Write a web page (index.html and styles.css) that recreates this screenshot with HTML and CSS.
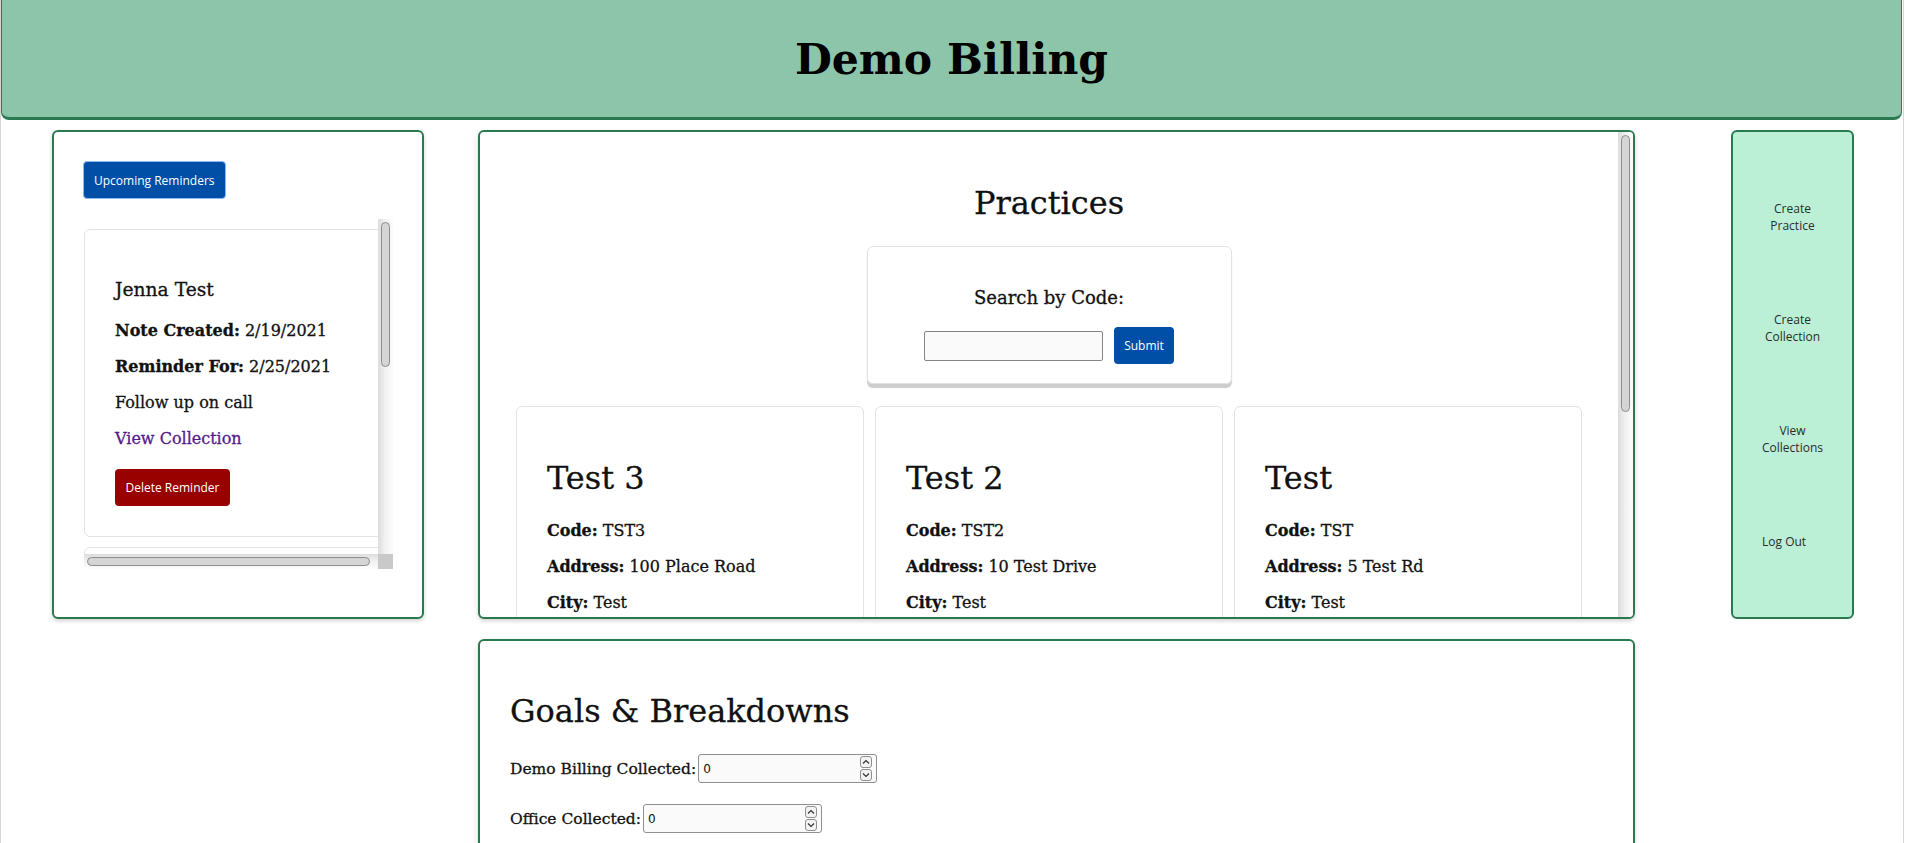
FILE: index.html
```html
<!DOCTYPE html>
<html lang="en">
<head>
<meta charset="utf-8">
<title>Demo Billing</title>
<link rel="stylesheet" href="styles.css">
</head>
<body>
<div class="page">
  <header class="topbar">
    <h1 class="brand">Demo Billing</h1>
  </header>

  <main class="layout">
    <aside class="panel reminders">
      <button class="btn btn-blue btn-upcoming">Upcoming Reminders</button>
      <div class="scroller">
        <div class="scroller-view">
          <div class="card reminder-card">
            <h3 class="card-name">Jenna Test</h3>
            <p><b>Note Created:</b> 2/19/2021</p>
            <p><b>Reminder For:</b> 2/25/2021</p>
            <p>Follow up on call</p>
            <p><a href="#" class="link">View Collection</a></p>
            <button class="btn btn-red">Delete Reminder</button>
          </div>
          <div class="card reminder-card reminder-card-next"></div>
        </div>
        <div class="vbar"><div class="vthumb vthumb-reminders"></div></div>
        <div class="hbar"><div class="hthumb"></div></div>
        <div class="bar-corner"></div>
      </div>
    </aside>

    <section class="panel practices">
      <div class="practices-view">
        <h1 class="section-title centered">Practices</h1>
        <div class="search-box">
          <h3 class="search-title">Search by Code:</h3>
          <div class="search-row">
            <input class="search-input" type="text">
            <button class="btn btn-blue">Submit</button>
          </div>
        </div>
        <div class="practice-list">
          <div class="card practice-card">
            <h1 class="practice-name">Test 3</h1>
            <p><b>Code:</b> TST3</p>
            <p><b>Address:</b> 100 Place Road</p>
            <p><b>City:</b> Test</p>
          </div>
          <div class="card practice-card">
            <h1 class="practice-name">Test 2</h1>
            <p><b>Code:</b> TST2</p>
            <p><b>Address:</b> 10 Test Drive</p>
            <p><b>City:</b> Test</p>
          </div>
          <div class="card practice-card">
            <h1 class="practice-name">Test</h1>
            <p><b>Code:</b> TST</p>
            <p><b>Address:</b> 5 Test Rd</p>
            <p><b>City:</b> Test</p>
          </div>
        </div>
      </div>
      <div class="vbar vbar-practices"><div class="vthumb vthumb-practices"></div></div>
    </section>

    <nav class="sidenav">
      <div class="nav-list">
        <a href="#" class="nav-link">Create Practice</a>
        <a href="#" class="nav-link">Create Collection</a>
        <a href="#" class="nav-link">View Collections</a>
        <button class="nav-logout">Log Out</button>
      </div>
    </nav>

    <section class="panel goals">
      <h1 class="section-title">Goals &amp; Breakdowns</h1>
      <div class="goal-row">
        <label class="goal-label">Demo Billing Collected:</label>
        <div class="num">
          <input class="num-input" type="text" value="0">
          <span class="spin">
            <span class="spin-btn"><svg width="8" height="6" viewBox="0 0 8 6"><path d="M1 4.5 L4 1.5 L7 4.5" fill="none" stroke="#333" stroke-width="1.2"/></svg></span>
            <span class="spin-btn"><svg width="8" height="6" viewBox="0 0 8 6"><path d="M1 1.5 L4 4.5 L7 1.5" fill="none" stroke="#333" stroke-width="1.2"/></svg></span>
          </span>
        </div>
      </div>
      <div class="goal-row">
        <label class="goal-label">Office Collected:</label>
        <div class="num">
          <input class="num-input" type="text" value="0">
          <span class="spin">
            <span class="spin-btn"><svg width="8" height="6" viewBox="0 0 8 6"><path d="M1 4.5 L4 1.5 L7 4.5" fill="none" stroke="#333" stroke-width="1.2"/></svg></span>
            <span class="spin-btn"><svg width="8" height="6" viewBox="0 0 8 6"><path d="M1 1.5 L4 4.5 L7 1.5" fill="none" stroke="#333" stroke-width="1.2"/></svg></span>
          </span>
        </div>
      </div>
    </section>
  </main>
</div>
</body>
</html>
```

FILE: styles.css
```css
* { box-sizing: border-box; }

html { overflow: hidden; }

body {
  margin: 0;
  font-family: "DejaVu Serif", "Liberation Serif", serif;
  color: #111;
  background: #fff;
}

.page {
  min-height: 843px;
  border-right: 1px solid #d6d6d6;
  border-left: 1px solid #d6d6d6;
  margin-right: 2px;
}

/* ---------- header ---------- */
.topbar {
  height: 120px;
  margin: 0 1px 0 0;
  background: #8dc5aa;
  border: 1px solid #2a7a50;
  border-top: 0;
  border-bottom: 3px solid #2a7a50;
  border-radius: 0 0 8px 8px;
  display: flex;
  align-items: center;
  justify-content: center;
}

.brand {
  margin: 0;
  font-family: "DejaVu Serif", serif;
  font-weight: bold;
  font-size: 42.5px;
  color: #000;
}

/* ---------- layout ---------- */
.layout {
  display: grid;
  grid-template-columns: 372px 1157px 165px;
  grid-template-rows: 489px auto;
  column-gap: 54px;
  row-gap: 20px;
  padding: 10px 0 0 51px;
  -webkit-text-stroke: 0.3px currentColor;
}

.panel {
  background: #fff;
  border: 2px solid #2a7a50;
  border-radius: 6px;
  box-shadow: 0 2px 4px rgba(0, 0, 0, 0.18);
}

.reminders { grid-column: 1; grid-row: 1; padding: 29px; }
.practices { grid-column: 2; grid-row: 1; }
.sidenav { grid-column: 3; grid-row: 1; justify-self: end; }
.goals { grid-column: 2; grid-row: 2; }

p {
  margin: 16px 0;
  font-size: 16px;
  line-height: 20px;
}

.card {
  border: 1px solid #e3e3e3;
  border-radius: 6px;
  background: #fff;
  padding: 30px;
}

/* ---------- buttons ---------- */
.btn {
  display: inline-block;
  height: 37px;
  padding: 0 10.5px;
  border: 0;
  border-radius: 4px;
  font-family: "Open Sans", "Noto Sans", sans-serif;
  font-size: 12px;
  color: #fff;
  cursor: pointer;
  -webkit-text-stroke: 0;
}

.btn-blue { background: #004fa6; }
.btn-red { background: #990000; }

.btn-upcoming {
  height: 38px;
  padding: 0 10px;
  border: 1px solid #8fb8ef;
}

/* ---------- drawn scrollbars ---------- */
.vbar {
  width: 15px;
  background: linear-gradient(to right, #dcdcdc, #f0f0f0 45%, #fcfcfc);
  padding: 3px 3px 0;
}

.hbar {
  height: 15px;
  background: linear-gradient(to bottom, #dcdcdc, #f0f0f0 45%, #fcfcfc);
  padding: 3px 0 0 3px;
}

.vthumb,
.hthumb {
  background: #d5d5d5;
  border: 1px solid #8c8c8c;
  border-radius: 5px;
}

.vthumb { width: 9px; }
.vthumb-reminders { height: 145px; }
.vthumb-practices { height: 277px; }
.hthumb { width: 283px; height: 9px; }

.bar-corner { background: #c9c9c9; }

/* ---------- reminders ---------- */
.scroller {
  display: grid;
  grid-template-columns: 1fr 15px;
  grid-template-rows: 1fr 15px;
  height: 350px;
  margin: 20px 0 0 1px;
}

.scroller-view {
  overflow: hidden;
}

.reminder-card {
  width: 305px;
  margin-top: 10px;
}

.reminder-card-next {
  height: 200px;
}

.card-name {
  margin: 19px 0 21px;
  font-size: 18.7px;
  font-weight: normal;
}

.link {
  color: #551a8b;
  text-decoration: none;
}

.reminder-card .btn-red {
  display: block;
  margin-top: 20px;
}

/* ---------- practices ---------- */
.practices {
  display: flex;
  overflow: hidden;
}

.practices-view {
  flex: 1;
  min-width: 0;
  overflow: hidden;
  padding-top: 31px;
}

.section-title {
  margin: 21.4px 0 24px;
  font-size: 32px;
  font-weight: normal;
}
.centered { text-align: center; }

.search-box {
  width: 365px;
  margin: 0 auto;
  padding: 22px 20px 19px;
  border: 1px solid #e2e2e2;
  border-radius: 6px;
  box-shadow: 0 4px 1px #cdcdcd;
  text-align: center;
}

.search-title {
  margin: 18px 0 19px;
  font-size: 18px;
  font-weight: normal;
}

.search-row {
  display: flex;
  justify-content: center;
  align-items: center;
  gap: 11px;
}

.search-input {
  width: 179px;
  height: 30px;
  border: 1px solid #858585;
  border-radius: 2px;
  background: #fafafa;
  padding: 0 4px;
}

.practice-list {
  display: flex;
  justify-content: center;
  align-items: flex-start;
  gap: 11px;
  margin-top: 22px;
}

.practice-card {
  width: 348px;
  height: 420px;
  flex: none;
}

.practice-name {
  margin: 22px 0 24px;
  font-size: 32px;
  font-weight: normal;
}

/* ---------- side nav ---------- */
.sidenav {
  width: 123px;
  height: 489px;
  background: #bcf0d6;
  border: 2px solid #2a7a50;
  border-radius: 6px;
  padding-top: 68px;
  -webkit-text-stroke: 0;
}

.nav-list {
  width: min-content;
  margin: 0 auto;
  display: flex;
  flex-direction: column;
  gap: 77px;
}

.nav-link,
.nav-logout {
  font-family: "Open Sans", "Noto Sans", sans-serif;
  font-size: 12px;
  color: #2b2b2b;
  text-decoration: none;
  text-align: center;
}

.nav-logout {
  padding: 0;
  border: 0;
  background: none;
  white-space: nowrap;
  text-align: left;
  align-self: flex-start;
  line-height: normal;
  cursor: pointer;
}

/* ---------- goals ---------- */
.goals {
  min-height: 400px;
  padding: 30px 30px;
}

.goal-row {
  display: flex;
  align-items: center;
  gap: 2px;
  height: 29px;
  margin-bottom: 21px;
}

.goal-label {
  font-size: 15.5px;
  line-height: 20px;
}

.num {
  display: flex;
  align-items: center;
  width: 179px;
  height: 29px;
  border: 1px solid #8f8f8f;
  border-radius: 3px;
  background: #fafafa;
  padding: 0 4px;
}

.num-input {
  flex: 1;
  min-width: 0;
  border: 0;
  padding: 0;
  background: transparent;
  font-family: "DejaVu Sans", sans-serif;
  font-size: 12px;
  color: #111;
  outline: none;
  -webkit-text-stroke: 0;
}

.spin {
  display: flex;
  flex-direction: column;
  gap: 1px;
}

.spin-btn {
  width: 12px;
  height: 12px;
  border: 1px solid #8f8f8f;
  border-radius: 3px;
  background: #f3f3f3;
  display: flex;
  align-items: center;
  justify-content: center;
}
```
